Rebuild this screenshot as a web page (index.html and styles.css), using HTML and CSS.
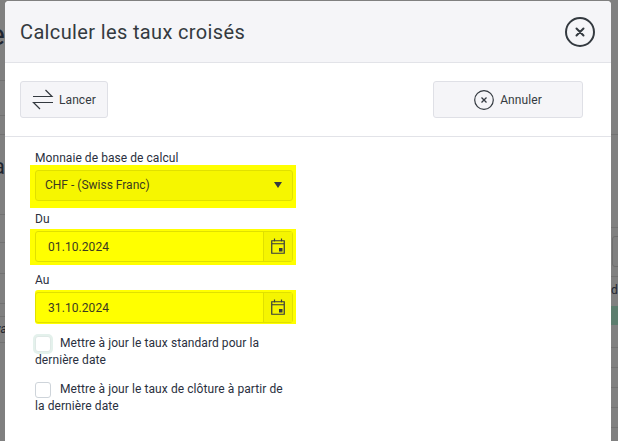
FILE: index.html
```html
<!DOCTYPE html>
<html lang="fr">
<head>
<meta charset="utf-8">
<title>Calculer les taux croisés</title>
<link rel="stylesheet" href="styles.css">
</head>
<body>
<div class="backdrop">
  <div class="strip strip-left">
    <span class="bg-text bg-e">e</span>
    <span class="bg-text bg-a">a</span>
    <span class="bg-text bg-va">va</span>
  </div>
  <div class="strip strip-right">
    <div class="bg-box"></div>
    <span class="bg-text bg-d">d</span>
    <div class="bg-green"></div>
  </div>
</div>
<main class="modal">
  <header class="modal-head">
    <h1 class="modal-title">Calculer les taux croisés</h1>
    <button class="close-btn" aria-label="Fermer">
      <svg width="32" height="32" viewBox="0 0 32 32"><circle cx="16" cy="16" r="14" fill="none" stroke="#343a40" stroke-width="2"/><path d="M12.500 12.500l7 7M19.500 12.500l-7 7" stroke="#343a40" stroke-width="2" stroke-linecap="round"/></svg>
    </button>
  </header>
  <div class="toolbar">
    <button class="btn btn-run">
      <svg width="22" height="21" viewBox="0 0 22 21"><path d="M1 7.500H20L13.500 1M21 13.500H1.500L8 20" fill="none" stroke="#343a40" stroke-width="1.200"/></svg>
      <span>Lancer</span>
    </button>
    <button class="btn btn-cancel">
      <svg width="20" height="20" viewBox="0 0 20 20"><circle cx="10" cy="10" r="9.300" fill="none" stroke="#343a40" stroke-width="1.200"/><path d="M7.500 7.500l5 5M12.500 7.500l-5 5" stroke="#343a40" stroke-width="1.300"/></svg>
      <span>Annuler</span>
    </button>
  </div>
  <form class="form">
    <label class="label">Monnaie de base de calcul</label>
    <div class="hl hl-select">
      <div class="control select"><span>CHF - (Swiss Franc)</span><i class="caret"></i></div>
    </div>
    <label class="label label-du">Du</label>
    <div class="hl hl-du">
      <div class="control date"><span class="date-val">01.10.2024</span><span class="date-btn">
        <svg width="14" height="16" viewBox="0 0 14 16"><path d="M.75 2.750h12.500v12.500H.75zM.75 5.750h12.500M3.500 .5v3M10.500 .5v3" fill="none" stroke="#343a40" stroke-width="1.200"/><rect x="8" y="10" width="3.500" height="3.500" fill="#343a40"/></svg>
      </span></div>
    </div>
    <label class="label label-au">Au</label>
    <div class="hl hl-au">
      <div class="control date"><span class="date-val">31.10.2024</span><span class="date-btn">
        <svg width="14" height="16" viewBox="0 0 14 16"><path d="M.75 2.750h12.500v12.500H.75zM.75 5.750h12.500M3.500 .5v3M10.500 .5v3" fill="none" stroke="#343a40" stroke-width="1.200"/><rect x="8" y="10" width="3.500" height="3.500" fill="#343a40"/></svg>
      </span></div>
    </div>
    <div class="check first"><i class="box focus"></i>Mettre à jour le taux standard pour la dernière date</div>
    <div class="check"><i class="box"></i>Mettre à jour le taux de clôture à partir de la dernière date</div>
  </form>
</main>
</body>
</html>
```
FILE: styles.css
```css
* { box-sizing: border-box; }
html, body { margin: 0; height: 100%; overflow: hidden; }
body { width: 618px; height: 441px; position: relative; background: #808080; font-family: Roboto, "Liberation Sans", sans-serif; color: #343a40; }
.backdrop { position: absolute; inset: 0; display: flex; justify-content: space-between; }
.strip { position: relative; height: 441px; overflow: hidden; background-repeat: no-repeat; }
.strip-left {
  width: 5px;
  background-image: linear-gradient(#727272, #727272), linear-gradient(#727272, #727272), linear-gradient(#727272, #727272), linear-gradient(#727272, #727272), linear-gradient(#727272, #727272), linear-gradient(#727272, #727272), linear-gradient(#727272, #727272), linear-gradient(#727272, #727272), linear-gradient(#727272, #727272);
  background-size: 100% 1px;
  background-position: 0 80px, 0 115px, 0 134px, 0 214px, 0 242px, 0 273px, 0 303px, 0 316px, 0 342px;
}
.strip-right {
  width: 7px;
  background-image: linear-gradient(#727272, #727272), linear-gradient(#727272, #727272), linear-gradient(#727272, #727272), linear-gradient(#727272, #727272), linear-gradient(#727272, #727272), linear-gradient(#727272, #727272), linear-gradient(#727272, #727272), linear-gradient(#727272, #727272);
  background-size: 100% 1px;
  background-position: 0 134px, 0 227px, 0 276px, 0 347px, 0 367px, 0 387px, 0 407px, 0 427px;
}
.bg-text { position: absolute; color: #1f2530; font-size: 22px; line-height: 26px; }
.bg-e { left: -11px; top: 17px; font-size: 30px; line-height: 36px; }
.bg-a { left: -7px; top: 154px; }
.bg-va { left: -5px; top: 322px; font-size: 12px; line-height: 14px; font-style: italic; }
.bg-box { position: absolute; left: 1px; top: 236px; width: 20px; height: 31px; border: 1px solid #6e6e6e; border-radius: 3px; }
.bg-d { left: 0; top: 283px; font-size: 12px; line-height: 14px; }
.bg-green { position: absolute; left: 0; right: 0; top: 306px; height: 19px; background: #5c7d6e; }
.modal { position: absolute; left: 5px; top: 1px; width: 606px; height: 440px; background: #fff; border-radius: 4px 4px 0 0; overflow: hidden; }
.modal-head { height: 62px; background: #f5f5f8; border-bottom: 1px solid #e2e3e8; display: flex; align-items: center; justify-content: space-between; padding: 0 15px; }
.modal-title { margin: 0; font-size: 20px; font-weight: 400; line-height: 24px; letter-spacing: .36px; color: #343a40; }
.close-btn { width: 32px; height: 32px; padding: 0; border: 0; background: none; display: flex; }
.toolbar { height: 74px; border-bottom: 1px solid #e2e3e8; display: flex; justify-content: space-between; align-items: flex-start; padding: 18px 28px 0 15px; }
.btn { height: 37px; display: flex; align-items: center; justify-content: center; gap: 6px; background: #f5f5f8; border: 1px solid #dfe0e6; border-radius: 3px; font: 400 12px Roboto, sans-serif; letter-spacing: .08px; color: #343a40; padding: 0; }
.btn-run { width: 88px; justify-content: flex-start; padding-left: 11px; gap: 5px; }
.btn-cancel { width: 150px; }
.form { padding: 13px 0 0 30px; width: 296px; }
.label { display: block; font-size: 12px; line-height: 16px; color: #2a3040; letter-spacing: .06px; }
.label-du { margin-top: 3px; margin-bottom: 2px; }
.label-au { margin-top: 7px; margin-bottom: 2px; }
.hl { background: #ff0; margin-left: -5px; padding: 2px 3px 0 5px; width: 266px; height: 36px; }
.hl-select { height: 43px; padding-top: 5px; margin-top: -1px; }
.hl-au { margin-left: 0; width: 261px; height: 34px; padding-left: 0; border-radius: 3px 0 0 3px; }
.control { height: 31px; background: #f5f500; border: 1px solid #e0e000; border-radius: 3px; font-size: 12px; letter-spacing: .08px; color: #3a3a20; display: flex; align-items: center; }
.select { justify-content: space-between; padding: 0 10px 2px 9px; background: #f6f600; letter-spacing: 0; }
.caret { width: 0; height: 0; border: 4.500px solid transparent; border-top: 6px solid #343a40; border-bottom: 0; }
.date { justify-content: space-between; background: #ff0; padding-left: 12px; }
.date-btn { width: 29px; height: 29px; padding-bottom: 2px; background: #f5f500; border-left: 1px solid #e0e000; display: flex; align-items: center; justify-content: center; }
.check { font-size: 12px; line-height: 17px; letter-spacing: .08px; color: #2a3040; width: 258px; }
.check.first { margin-top: 11px; }
.check + .check { margin-top: 12px; }
.box { display: inline-block; width: 16px; height: 16px; border: 1px solid #ced4da; border-radius: 3px; background: #fff; vertical-align: -2px; margin: -3px 9px -3px 0; }
.box.focus { border-color: #dfe9e6; box-shadow: 0 0 0 2px #e4f1ec; }
```
